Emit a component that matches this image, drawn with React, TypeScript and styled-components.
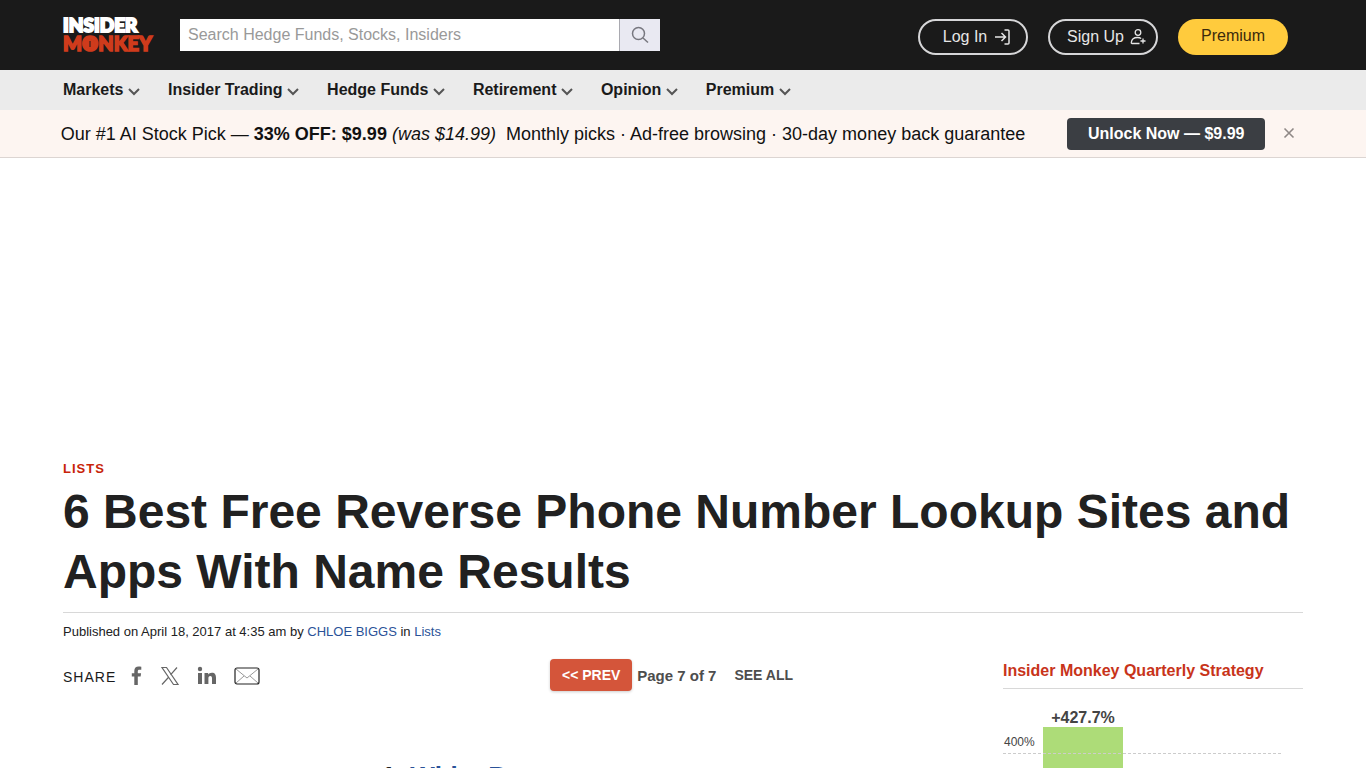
import React from "react";
import styled, { createGlobalStyle } from "styled-components";

const GlobalStyle = createGlobalStyle`
  * { box-sizing: border-box; }
  body { margin: 0; background: #fff; color: #212121; font-family: Arial, "Liberation Sans", sans-serif; }
  a { color: #2a5298; text-decoration: none; }
  button, input { font-family: inherit; }
`;

const Page = styled.div`
  height: 100vh;
  overflow: hidden;
`;

const Container = styled.div`
  width: 100%;
  max-width: 1240px;
  margin: 0 auto;
`;

const TopBar = styled.header`
  background: #1a1a1a;
`;

const TopBarInner = styled(Container)`
  display: flex;
  align-items: flex-start;
  height: 70px;
  padding: 16px 15px 0 0;
`;

const LogoLink = styled.a`
  flex: 0 0 117px;
  svg { display: block; overflow: visible; }
`;

const Search = styled.form`
  display: flex;
  width: 480px;
  height: 32px;
  margin-top: 3px;
`;

const SearchInput = styled.input`
  flex: 1;
  min-width: 0;
  border: 0;
  padding: 0 8px;
  font-size: 16px;
  background: #fff;
  &::placeholder { color: #999; opacity: 1; }
`;

const SearchButton = styled.button`
  display: flex;
  align-items: center;
  justify-content: center;
  width: 41px;
  padding: 0;
  border: 0;
  border-left: 1px solid #a9a9b0;
  background: #e9e9f2;
`;

const Account = styled.div`
  display: flex;
  gap: 20px;
  margin: 3px 0 0 auto;
`;

const PillLink = styled.a<{ $gold?: boolean }>`
  display: flex;
  align-items: center;
  justify-content: center;
  gap: 6px;
  width: 110px;
  height: 36px;
  border-radius: 18px;
  font-size: 16px;
  line-height: 18px;
  border: ${(p) => (p.$gold ? "0" : "2px solid #d6d6d8")};
  background: ${(p) => (p.$gold ? "#ffcb3d" : "transparent")};
  color: ${(p) => (p.$gold ? "#3b2a0c" : "#e6e6e6")};
  padding: ${(p) => (p.$gold ? "0 0 2px" : "0 0 0 8px")};
`;

const NavBar = styled.nav`
  background: #ebebeb;
`;

const NavList = styled.ul`
  display: flex;
  gap: 26px;
  height: 40px;
  align-items: center;
  list-style: none;
  width: 100%;
  max-width: 1240px;
  margin: 0 auto;
  padding: 0;
`;

const NavButton = styled.button`
  display: block;
  padding: 0;
  border: 0;
  background: none;
  color: #1a1a1a;
  font-size: 16px;
  font-weight: 700;
  line-height: 20px;
  white-space: nowrap;
  svg { vertical-align: -2px; }
`;

const Promo = styled.aside`
  display: flex;
  align-items: center;
  justify-content: center;
  height: 48px;
  padding: 0 4px 0 0;
  background: #fdf5f1;
  border-bottom: 1px solid #dcd5d2;
  color: #111;
  font-size: 18px;
  white-space: pre;
`;

const PromoText = styled.span`
  padding-top: 2px;
`;

const PromoLink = styled.a`
  margin-left: 42px;
  width: 198px;
  height: 32px;
  border-radius: 4px;
  background: #3b3e43;
  color: #fff;
  font-size: 16px;
  font-weight: 700;
  line-height: 31px;
  text-align: center;
`;

const CloseButton = styled.button`
  display: flex;
  margin-left: 12px;
  padding: 5px 6px 7px;
  border: 0;
  background: none;
`;

const AdSpace = styled.div`
  height: 301px;
`;

const Category = styled.a`
  display: block;
  color: #c8240a;
  font-size: 13px;
  font-weight: 700;
  line-height: 20px;
  letter-spacing: 1px;
`;

const Title = styled.h1`
  margin: 3px 0 0;
  padding-bottom: 10px;
  border-bottom: 1px solid #d8d8d8;
  font-size: 48px;
  line-height: 60px;
  font-weight: 700;
`;

const Byline = styled.p`
  margin: 11px 0 0;
  font-size: 13px;
  line-height: 16px;
`;

const Columns = styled.div`
  display: flex;
  justify-content: space-between;
  margin-top: 18px;
`;

const Article = styled.main`
  width: 820px;
`;

const ArticleTools = styled.div`
  display: flex;
  align-items: center;
  height: 34px;
`;

const Share = styled.div`
  display: flex;
  align-items: center;
  padding-top: 2px;
  font-size: 14px;
  letter-spacing: 1px;
  color: #1a1a1a;
`;

const ShareLabel = styled.span`
  padding-top: 2px;
`;

const ShareIcons = styled.div`
  display: flex;
  align-items: center;
  gap: 17px;
  margin-left: 15px;
  a { display: flex; }
`;

const Pager = styled.div`
  display: flex;
  align-items: center;
  margin-left: auto;
  margin-right: 90px;
  color: #4d4d4d;
  font-size: 15px;
  font-weight: 700;
`;

const PrevLink = styled.a`
  width: 82px;
  height: 32px;
  margin-right: 5px;
  border-radius: 4px;
  background: #d4553a;
  box-shadow: 0 1px 3px rgba(0, 0, 0, 0.2);
  color: #fff;
  font-size: 14px;
  line-height: 32px;
  text-align: center;
`;

const SeeAll = styled.a`
  margin-left: 18px;
  color: #4d4d4d;
  font-size: 14px;
`;

const EntryTitle = styled.h2`
  margin: 68px 0 0;
  font-size: 26px;
  line-height: 32px;
  text-align: center;
`;

const Sidebar = styled.aside`
  width: 300px;
`;

const SidebarTitle = styled.h2`
  margin: 0;
  padding: 3px 0 7px;
  border-bottom: 1px solid #d8d8d8;
  color: #c8341a;
  font-size: 16px;
  line-height: 20px;
`;

const Chart = styled.svg`
  display: block;
  font-family: Arial, "Liberation Sans", sans-serif;
  fill: #444;
`;

const menus = ["Markets", "Insider Trading", "Hedge Funds", "Retirement", "Opinion", "Premium"];

const Logo = () => (
  <svg width="92" height="38" viewBox="0 0 92 38" fontFamily="Lato, sans-serif" fontWeight="900">
    <text x="0" y="16" fontSize="19" fill="#fff" stroke="#fff" strokeWidth="2">INSIDER</text>
    <text x="0" y="35" fontSize="20" fill="#cf3b1c" stroke="#cf3b1c" strokeWidth="1.6">MONKEY</text>
    <circle cx="27" cy="28" r="5" fill="#cf3b1c" />
    <path d="M27 25v6" stroke="#1a1a1a" strokeWidth="1" />
  </svg>
);

const Chevron = () => (
  <svg width="14" height="10" viewBox="0 0 14 10" fill="none" stroke="#555" strokeWidth="2">
    <path d="M1 2l5 5 5-5" />
  </svg>
);

export default function App() {
  return (
    <Page>
      <GlobalStyle />
      <TopBar>
        <TopBarInner>
          <LogoLink href="#" aria-label="Insider Monkey"><Logo /></LogoLink>
          <Search onSubmit={(e) => e.preventDefault()}>
            <SearchInput type="text" aria-label="Search" placeholder="Search Hedge Funds, Stocks, Insiders" />
            <SearchButton type="submit" aria-label="Submit search">
              <svg width="18" height="18" viewBox="0 0 18 18" fill="none" stroke="#77777f" strokeWidth="1.5">
                <circle cx="7.5" cy="7.5" r="6" />
                <path d="M12 12l5 4.500" />
              </svg>
            </SearchButton>
          </Search>
          <Account>
            <PillLink href="#">
              Log In
              <svg width="18" height="18" viewBox="0 0 18 18" fill="none" stroke="#e6e6e6" strokeWidth="1.5">
                <path d="M2 9h10M8.500 5l4 4-4 4M11.500 2H15q1 0 1 1v12q0 1-1 1h-3.500" />
              </svg>
            </PillLink>
            <PillLink href="#">
              Sign Up
              <svg width="17" height="18" viewBox="0 0 17 18" fill="none" stroke="#e6e6e6" strokeWidth="1.3">
                <circle cx="8" cy="4.500" r="2.800" />
                <path d="M9.500 15.500H2q-.8 0-.7-1c.3-3.200 2.700-5 6.200-5 1.500 0 2.700.3 3.700 1M13 10.500v5M10.500 13h5" />
              </svg>
            </PillLink>
            <PillLink href="#" $gold>Premium</PillLink>
          </Account>
        </TopBarInner>
      </TopBar>
      <NavBar>
        <NavList>
          {menus.map((name) => (
            <li key={name}>
              <NavButton type="button">{name} <Chevron /></NavButton>
            </li>
          ))}
        </NavList>
      </NavBar>
      <Promo>
        <PromoText>Our #1 AI Stock Pick — <b>33% OFF: $9.99</b> <i>(was $14.99)</i>{"  "}Monthly picks · Ad-free browsing · 30-day money back guarantee</PromoText>
        <PromoLink href="#">Unlock Now — $9.99</PromoLink>
        <CloseButton type="button" aria-label="Close">
          <svg width="12" height="12" viewBox="0 0 12 12" stroke="#8f8886" strokeWidth="1.6">
            <path d="M1.500 1.500l9 9M10.500 1.500l-9 9" />
          </svg>
        </CloseButton>
      </Promo>
      <AdSpace />
      <Container>
        <Category href="#">LISTS</Category>
        <Title>6 Best Free Reverse Phone Number Lookup Sites and Apps With Name Results</Title>
        <Byline>
          Published on April 18, 2017 at 4:35 am by <a href="#">CHLOE BIGGS</a> in <a href="#">Lists</a>
        </Byline>
        <Columns>
          <Article>
            <ArticleTools>
              <Share>
                <ShareLabel>SHARE</ShareLabel>
                <ShareIcons>
                  <a href="#" aria-label="Facebook">
                    <svg width="12" height="20" viewBox="0 0 12 20" fill="#666">
                      <path d="M3.300 19v-8.500H.8V7.300h2.500V5c0-3 1.700-4.400 4.300-4.400 1.200 0 2.300.1 2.700.2v2.900H8.500C7.100 3.700 6.800 4.400 6.800 5.300v2h3.300l-.5 3.200H6.800V19z" />
                    </svg>
                  </a>
                  <a href="#" aria-label="X">
                    <svg width="20" height="20" viewBox="0 0 20 20" fill="none" stroke="#666" strokeWidth="1.200">
                      <path d="M2 1.500h4.500l11.500 17h-4.500zM17 1.500l-6.500 7.300M8.800 11L2 18.500" />
                    </svg>
                  </a>
                  <a href="#" aria-label="LinkedIn">
                    <svg width="20" height="20" viewBox="0 0 20 20" fill="#666">
                      <circle cx="3" cy="3" r="2.200" />
                      <path d="M1 7h4v11H1zM7.500 7h3.700v1.600C11.800 7.600 13 6.700 14.900 6.700c3.200 0 4.100 2.100 4.100 5V18h-4v-5.500c0-1.400-.3-2.500-1.700-2.500-1.500 0-1.900 1.100-1.900 2.500V18h-3.900z" />
                    </svg>
                  </a>
                  <a href="#" aria-label="Email">
                    <svg width="26" height="18" viewBox="0 0 26 18" fill="none">
                      <path d="M2 2l11 9L24 2M2 16l8-7M24 16l-8-7" stroke="#999" />
                      <rect x="1" y="1" width="24" height="16" rx="2" stroke="#222" strokeWidth="1.200" />
                    </svg>
                  </a>
                </ShareIcons>
              </Share>
              <Pager>
                <PrevLink href="#">&lt;&lt; PREV</PrevLink>
                <span>Page 7 of 7</span>
                <SeeAll href="#">SEE ALL</SeeAll>
              </Pager>
            </ArticleTools>
            <EntryTitle>1. <a href="#">White Pages</a></EntryTitle>
          </Article>
          <Sidebar>
            <SidebarTitle>Insider Monkey Quarterly Strategy</SidebarTitle>
            <Chart width="300" height="240" viewBox="0 0 300 240" role="img" aria-label="Quarterly strategy returns">
              <rect x="40" y="38" width="80" height="202" fill="#addc78" />
              <path d="M0 64.500h280" stroke="#ccc" strokeDasharray="3 2" />
              <text x="80" y="34" fontSize="16" fontWeight="700" textAnchor="middle">+427.7%</text>
              <text x="1" y="57" fontSize="12">400%</text>
            </Chart>
          </Sidebar>
        </Columns>
      </Container>
    </Page>
  );
}
